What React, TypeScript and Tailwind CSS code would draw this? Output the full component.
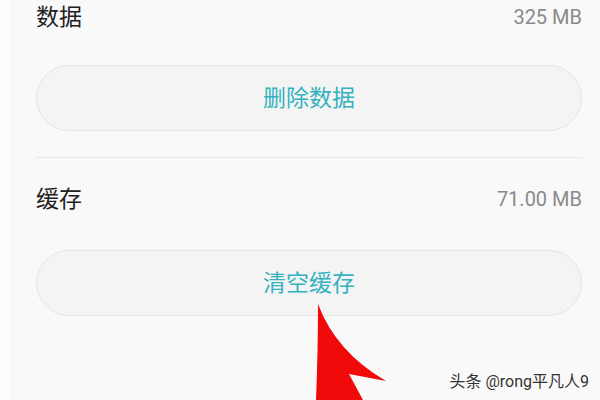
/**
 * 存储页面截图复刻：数据 / 缓存 两块，每块带一个圆角按钮。
 */

const cjk = "font-['Roboto','Noto_Sans_CJK_SC',sans-serif]";

type StorageBlockProps = {
  label: string;
  size: string;
  action: string;
  buttonGap: string;
};

function StorageBlock({ label, size, action, buttonGap }: StorageBlockProps) {
  return (
    <section>
      <div className="flex h-[34px] items-center justify-between">
        <span className={`${cjk} text-[23px] leading-none text-[#222]`}>
          {label}
        </span>
        <span className="font-['Roboto',sans-serif] text-[20px] leading-none text-[#8a8a8a]">
          {size}
        </span>
      </div>

      <button
        type="button"
        className={`${cjk} ${buttonGap} flex h-[66px] w-full items-center justify-center rounded-full border border-[#e4e4e4] bg-[#f4f4f4] pt-[3px] text-[23px] text-[#35b2be]`}
      >
        {action}
      </button>
    </section>
  );
}

function RedArrow() {
  return (
    <svg
      className="absolute left-0 top-0"
      width="600"
      height="400"
      viewBox="0 0 600 400"
    >
      <path
        d="M318 304 Q336 352 386 381 L349 374 L363 400 L316 400 Q318 350 318 304 Z"
        fill="#f00a0a"
      />
    </svg>
  );
}

export default function App() {
  return (
    <div className="relative h-[400px] w-[600px] overflow-hidden bg-[#f9f9f9]">
      <div className="flex h-full">
        <div className="w-[10px] shrink-0 bg-[#fdfdfd]" />

        <div className="flex-1 pl-[26px] pr-[18px]">
          <StorageBlock
            label="数据"
            size="325 MB"
            action="删除数据"
            buttonGap="mt-[31px]"
          />

          <div className="mt-[26px] h-px bg-[#e8e8e8]" />

          <div className="mt-[24px]">
            <StorageBlock
              label="缓存"
              size="71.00 MB"
              action="清空缓存"
              buttonGap="mt-[34px]"
            />
          </div>
        </div>
      </div>

      <RedArrow />

      <div
        className={`${cjk} absolute bottom-[10px] right-[11px] text-[16px] leading-none text-[#333] [text-shadow:0_0_2px_#ffffff]`}
      >
        头条 @rong平凡人9
      </div>
    </div>
  );
}
